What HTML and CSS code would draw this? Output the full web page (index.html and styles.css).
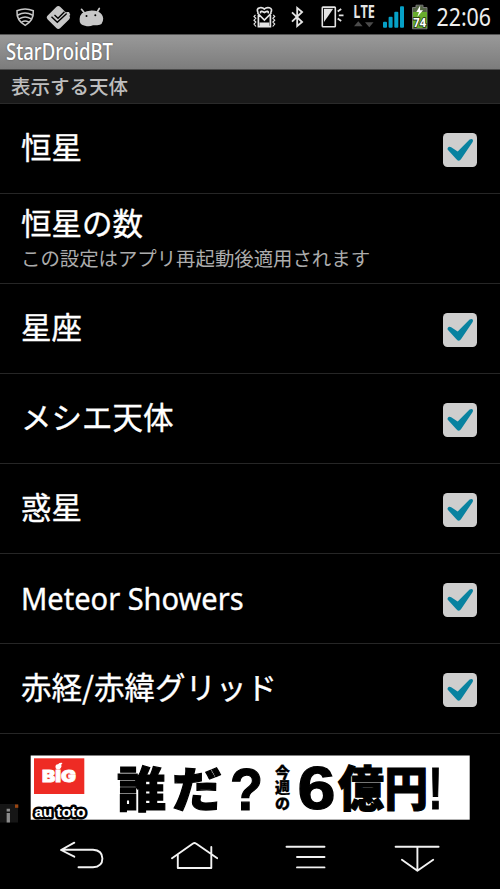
FILE: index.html
```html
<!DOCTYPE html>
<html lang="ja">
<head>
<meta charset="utf-8">
<title>StarDroidBT</title>
<link rel="stylesheet" href="styles.css">
</head>
<body>
<svg width="0" height="0" class="defs">
  <symbol id="check" viewBox="0 0 34 34">
    <rect x="0" y="0" width="34" height="34" rx="4.5" fill="#cecece"/>
    <path d="M4.6 15.2Q5.8 13 8.2 14.2L14.7 18.4 26.6 6.6Q29.4 5 30 7.4 30 8.4 29.3 9.4L18.3 25.7Q15.8 29.4 13.2 26.1L5 17Q4.2 16.2 4.6 15.2Z" fill="#0782a0"/>
  </symbol>
</svg>
<header class="status">
  <svg class="icons-left" width="110" height="34" viewBox="0 0 110 34">
    <g fill="none" stroke="#c8c8c8" stroke-width="1.5" stroke-linecap="round">
      <path d="M17 10.8Q25 7 33.3 10.8Q34 20.5 25.2 25.3Q16.2 20.5 17 10.8Z"/>
      <path d="M18 15Q25 11.2 32.3 15M19.6 18.7Q25 15.4 30.8 18.7M22 21.8Q25 20 28.5 21.8"/>
    </g>
    <path d="M56.2 7Q58.3 5 60.4 7L69 15.6Q71 17.5 69 19.4L60.3 28Q58.3 30 56.3 28L47.7 19.4Q45.7 17.5 47.7 15.6Z" fill="#c8c8c8"/>
    <path d="M51.5 16.8L57.3 22.3 70.5 10M54.5 15L58 18.2 64.5 11.8" fill="none" stroke="#000" stroke-width="1.4"/>
    <path d="M66 12L69 12 70.3 15 68 17Z" fill="#c8c8c8"/>
    <path d="M81.5 9.3L84.5 13M99.3 8.5L97.2 12" stroke="#c8c8c8" stroke-width="1.7" stroke-linecap="round"/>
    <path d="M82 13.2Q90 8.8 98.5 11.8Q102.7 14 103.2 18.5Q103.2 25.3 97 25.2H93Q89.5 27 85 25.7Q79.2 25 79.6 19Q80 15 82 13.2Z" fill="#c8c8c8"/>
    <circle cx="86.5" cy="16" r="1" fill="#000"/><circle cx="95.3" cy="15.2" r="1" fill="#000"/>
  </svg>
  <svg class="icons-right" width="255" height="34" viewBox="245 0 255 34">
    <g fill="none" stroke="#e4e4e4" stroke-width="1.7">
      <path d="M258.2 13Q255.9 8.6 259.6 7.8Q262.3 7.1 264.4 9Q266.5 7 269.4 7.8Q273 8.8 270.6 13M258.4 15V26.6H270.4V15M257.4 13L264.4 20 271.4 13M260.6 13.4Q259.8 9.8 264.4 12.4Q269 9.8 268.2 13.4"/>
      <path d="M255.5 14.8L254 16.4 255.8 18.3 254 20.2 255.8 22.1 254 24 256 26.5M273.2 14.8L274.7 16.4 272.9 18.3 274.7 20.2 272.9 22.1 274.7 24 272.7 26.5" stroke-width="1.2"/>
      <path d="M292 12.3L302.1 22 297.2 26V8L302.1 12 292 21.7" stroke-width="1.8"/>
      <rect x="322.3" y="7.1" width="13" height="19.7" rx=".7" stroke-width="1.6"/>
      <path d="M337.7 11.4L341.2 9M338.8 15.3H343.5M337.7 18.6L341.2 21" stroke-width="1.8"/>
    </g>
    <path d="M259.5 22.5H269.3V26H259.5Z" fill="#e4e4e4"/>
    <path d="M324 8.8H333.2L324 22Z" fill="#e4e4e4"/>
    <text class="lte" x="353.3" y="17.7" textLength="21.5" lengthAdjust="spacingAndGlyphs">LTE</text>
    <path d="M354 26.3L358.3 21.2 362.6 26.3ZM365 22.2H373.5L369.3 27.3Z" fill="#4b4b4b"/>
    <g fill="#06a1c7">
      <rect x="383" y="21.8" width="4" height="6" rx="1"/><rect x="388.6" y="16.8" width="4" height="11" rx="1"/><rect x="394.3" y="11.8" width="4" height="16" rx="1"/><rect x="400" y="6.3" width="4" height="21.5" rx="1"/>
    </g>
    <path d="M412.5 7.5H416V5.2H423V7.5H427V28.8H412.5Z" fill="#536544" stroke="#777" stroke-width="1"/>
    <path d="M413 12H427V28H413Z" fill="#68ad2d"/>
    <path d="M420.2 5.5L416.3 12H419L417.3 17 423 10.2H420Z" fill="#fff"/>
    <text class="battery" x="413.3" y="27.3" textLength="12.8" lengthAdjust="spacingAndGlyphs">74</text>
    <text class="clock" x="436.5" y="26" textLength="54.5" lengthAdjust="spacingAndGlyphs">22:06</text>
  </svg>
</header>
<h1 class="title"><span>StarDroidBT</span></h1>
<h2 class="category">表示する天体</h2>
<main class="list">
  <section class="row"><div class="label">恒星</div><svg class="check"><use href="#check"/></svg></section>
  <section class="row two-line"><div><div class="label">恒星の数</div><div class="summary">この設定はアプリ再起動後適用されます</div></div></section>
  <section class="row"><div class="label">星座</div><svg class="check"><use href="#check"/></svg></section>
  <section class="row"><div class="label">メシエ天体</div><svg class="check"><use href="#check"/></svg></section>
  <section class="row"><div class="label">惑星</div><svg class="check"><use href="#check"/></svg></section>
  <section class="row"><div class="label latin">Meteor Showers</div><svg class="check"><use href="#check"/></svg></section>
  <section class="row"><div class="label">赤経/赤緯グリッド</div><svg class="check"><use href="#check"/></svg></section>
</main>
<aside class="ad">
  <svg width="500" height="91" viewBox="0 734 500 91">
    <rect x="0" y="804" width="18" height="18.5" fill="#161616"/>
    <path d="M8.3 808.8V811.5M8.3 813V822.5" stroke="#8c8c8c" stroke-width="3.3"/>
    <rect x="15" y="804.5" width="3.3" height="3.3" fill="#9b4612"/>
    <rect x="30.7" y="755.5" width="439" height="64.2" fill="#fff"/>
    <rect x="34" y="758.3" width="50.3" height="35.7" fill="#ee2b24"/>
    <text class="big" x="42" y="781.6" textLength="34" lengthAdjust="spacingAndGlyphs">BIG</text>
    <path d="M55.8 768.5Q54.5 764.5 58 764.3Q60 762.3 62.5 763Q60.5 764.5 61.5 766.5Q60.5 769.8 57.5 769.5Z" fill="#fff"/>
    <text class="toto" x="34.5" y="817.3" textLength="51" lengthAdjust="spacingAndGlyphs">au toto</text>
    <g class="slogan">
      <text x="117" y="806.5" textLength="49" lengthAdjust="spacingAndGlyphs">誰</text>
      <text x="172" y="806.5" textLength="50" lengthAdjust="spacingAndGlyphs">だ</text>
      <text class="question" x="230" y="809.5" textLength="33" lengthAdjust="spacingAndGlyphs">?</text>
      <text class="tiny" x="275" y="778">今</text>
      <text class="tiny" x="275" y="793.3">週</text>
      <text class="tiny" x="275" y="808.6">の</text>
      <text class="six" x="297.5" y="808.5" textLength="38" lengthAdjust="spacingAndGlyphs">6</text>
      <text x="338" y="805.5" textLength="46" lengthAdjust="spacingAndGlyphs">億</text>
      <text x="384.5" y="805.5" textLength="43.5" lengthAdjust="spacingAndGlyphs">円</text>
    </g>
    <text class="bang" x="428.5" y="808.5" textLength="14" lengthAdjust="spacingAndGlyphs">!</text>
  </svg>
</aside>
<nav class="nav">
  <svg viewBox="58 825 48 64"><path d="M73.3 842.7L60 850 73.3 856.7M60.5 849.7H92Q101.4 850.3 101.4 858.5Q101.4 866.7 92 867.3H77.5"/></svg>
  <svg viewBox="170 825 48 64"><path d="M172 858.2L193 843.5Q194.5 842.4 196 843.5L217.3 858.2M177.8 854.7V868H211.3V847"/></svg>
  <svg viewBox="282 825 48 64"><path d="M286.5 846.8H324.5M297 857H324.5M297 867.4H324.5"/></svg>
  <svg viewBox="392 825 48 64"><path d="M394.6 846.8H437.6M416.4 847V870M400.9 859.7L416.4 870.8 432.2 859.7"/></svg>
</nav>
</body>
</html>
```
FILE: styles.css
```css
* { box-sizing: border-box; }
body {
  margin: 0;
  width: 500px;
  height: 889px;
  overflow: hidden;
  background: #000;
  color: #fff;
  font-family: "Noto Sans CJK JP", "Noto Sans", sans-serif;
  display: flex;
  flex-direction: column;
}
.defs { position: absolute; }
svg { display: block; flex: none; }
.status {
  height: 34px;
  flex: none;
  display: flex;
  justify-content: space-between;
}
.lte { font: bold 17px "Open Sans", sans-serif; fill: #e4e4e4; }
.battery { font: bold 12.5px "Open Sans", sans-serif; fill: #fff; stroke: #1d2c12; stroke-width: 1.6px; paint-order: stroke; }
.clock { font: 25px "Noto Sans", sans-serif; fill: #eee; }
.title {
  flex: none;
  margin: 0;
  height: 36px;
  padding-left: 6px;
  background: linear-gradient(#999, #7c7c7c);
  border-top: 1px solid #555;
  border-bottom: 1px solid #4a4a4a;
  font: 500 23px/33px "Noto Sans", sans-serif;
  text-shadow: 0 0 2px rgba(0, 0, 0, .4);
}
.title span { display: inline-block; transform: scaleX(.805); transform-origin: 0 50%; }
.category {
  flex: none;
  margin: 0;
  height: 34px;
  padding-left: 11px;
  background: #1a1a1a;
  border-bottom: 1px solid #2a2a2a;
  color: #bebebe;
  font-size: 19.5px;
  font-weight: 500;
  line-height: 31px;
}
.list {
  flex: none;
  height: 630px;
  display: grid;
  grid-template-rows: repeat(7, 1fr);
}
.row {
  display: flex;
  align-items: center;
  justify-content: space-between;
  padding: 0 23px 0 21px;
  border-bottom: 1px solid #262626;
}
.label {
  font-size: 30.5px;
  line-height: 36px;
  white-space: nowrap;
  padding-bottom: 6px;
  -webkit-text-stroke: .35px #fff;
}
.latin { font-family: "Noto Sans", sans-serif; padding-bottom: 1px; transform: scaleX(.952); transform-origin: 0 50%; }
.check { width: 34px; height: 34px; margin-top: 2px; }
.two-line .label { padding: 0; margin-top: -2px; }
.summary { font-size: 19.4px; line-height: 28px; color: #acacac; padding-top: 4px; white-space: nowrap; }
.ad { flex: none; height: 91px; }
.big { font: 900 16.5px Inter, sans-serif; fill: #fff; stroke: #fff; stroke-width: .8px; }
.toto { font: bold 15px "Liberation Sans", sans-serif; fill: #fff; stroke: #000; stroke-width: 5px; paint-order: stroke; stroke-linejoin: round; }
.slogan { font: 900 48px "Noto Sans CJK JP", sans-serif; fill: #000; stroke: #000; stroke-width: 1.2px; }
.tiny { font-size: 15px; stroke-width: .3px; }
.six { font: 900 61px "Liberation Sans", sans-serif; }
.question { font: 900 59px "Liberation Sans", sans-serif; }
.bang { font: 900 60px "Liberation Sans", sans-serif; fill: #000; stroke: #000; stroke-width: 1px; }
.nav {
  height: 64px;
  flex: none;
  display: flex;
  justify-content: space-between;
  padding: 0 59px 0 59px;
}
.nav svg { width: 48px; height: 64px; fill: none; stroke: #f2f2f2; stroke-width: 1.9px; stroke-linecap: round; stroke-linejoin: round; }
```
